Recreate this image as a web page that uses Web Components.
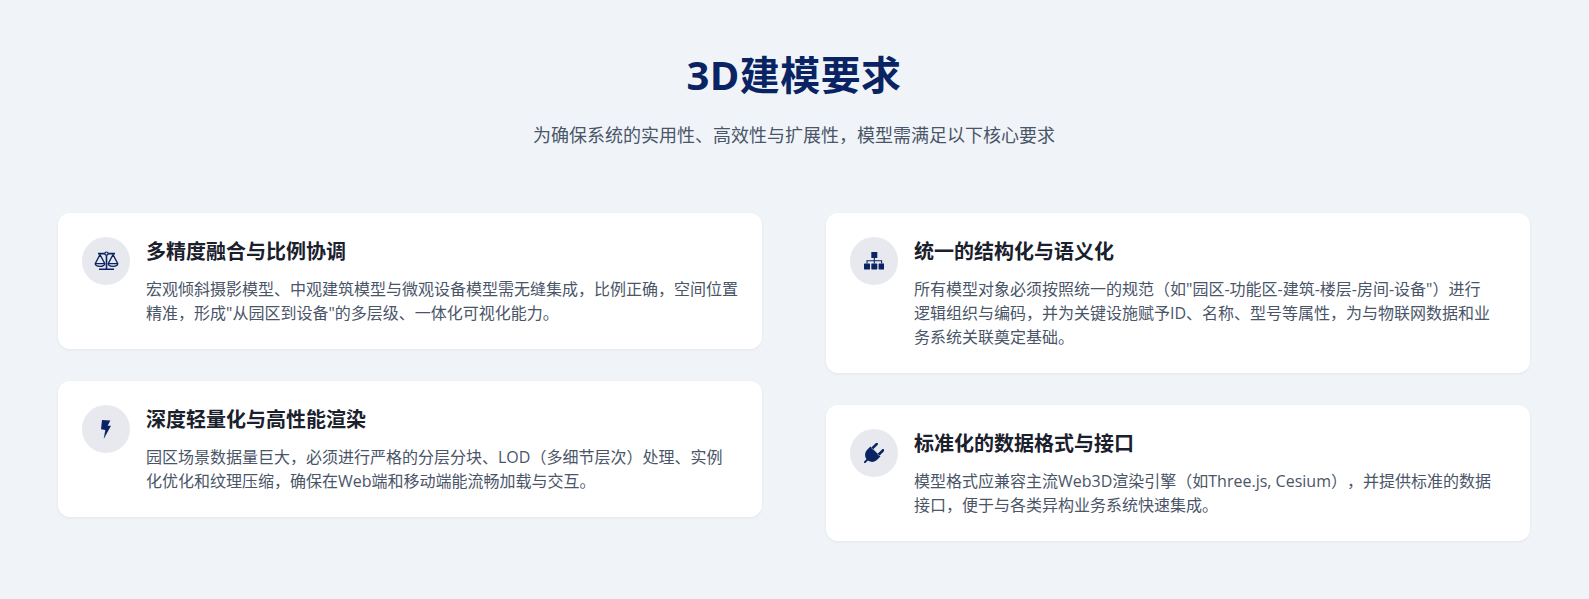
<!DOCTYPE html>
<html lang="zh">
<head>
<meta charset="utf-8">
<title>3D建模要求</title>
<style>
  html, body { margin: 0; background: #f0f4f8; }
  body { font-family: "Open Sans", "Noto Sans CJK SC", sans-serif; text-spacing-trim: space-all; }
</style>
</head>
<body>
<req-page>
  <req-header heading="3D建模要求" sub="为确保系统的实用性、高效性与扩展性，模型需满足以下核心要求"></req-header>
  <req-column>
    <req-card icon="scale" heading="多精度融合与比例协调">宏观倾斜摄影模型、中观建筑模型与微观设备模型需无缝集成，比例正确，空间位置精准，形成"从园区到设备"的多层级、一体化可视化能力。</req-card>
    <req-card icon="bolt" heading="深度轻量化与高性能渲染">园区场景数据量巨大，必须进行严格的分层分块、LOD（多细节层次）处理、实例化优化和纹理压缩，确保在Web端和移动端能流畅加载与交互。</req-card>
  </req-column>
  <req-column>
    <req-card icon="tree" heading="统一的结构化与语义化">所有模型对象必须按照统一的规范（如"园区-功能区-建筑-楼层-房间-设备"）进行<br>逻辑组织与编码，并为关键设施赋予ID、名称、型号等属性，为与物联网数据和业务系统关联奠定基础。</req-card>
    <req-card icon="plug" heading="标准化的数据格式与接口">模型格式应兼容主流Web3D渲染引擎（如Three.js, Cesium），并提供标准的数据接口，便于与各类异构业务系统快速集成。</req-card>
  </req-column>
</req-page>
<script>
const ICONS = {
  scale: '<svg viewBox="0 0 25 20" width="25" height="20"><g fill="none" stroke="currentColor"><path stroke-width="1.6" d="M4 2.600h17M12.500 2.600V18M5 18.300h15"/><path stroke-width="1.300" d="M6 3.600 1.200 12.600a4.800 2.800 0 0 0 9.600 0zM19 3.600 14.200 12.600a4.800 2.800 0 0 0 9.600 0zM1.200 12.600h9.600M14.200 12.600h9.600"/></g><circle cx="12.500" cy="2.600" r="1.600" fill="#e7e9ef" stroke="currentColor" stroke-width="1.200"/></svg>',
  bolt: '<svg viewBox="0 0 10 19" width="10" height="19"><path fill="currentColor" d="M1 0 9.300.5 6.700 5.700H10L2.700 19 4.300 10 0 9.300z"/></svg>',
  tree: '<svg viewBox="0 0 20.600 17.400" width="20.600" height="17.400"><g fill="currentColor"><rect x="7.300" y="0" width="6" height="6" rx=".6"/><rect x="0" y="11.400" width="6" height="6" rx=".6"/><rect x="7.300" y="11.400" width="6" height="6" rx=".6"/><rect x="14.600" y="11.400" width="6" height="6" rx=".6"/></g><path fill="none" stroke="currentColor" stroke-width="1.100" d="M10.300 6v5.400M3 11.400V8.700h14.600v2.700"/></svg>',
  plug: '<svg viewBox="-181 -249 430 430" width="20" height="20"><g transform="rotate(45) translate(-192 -256)"><path fill="currentColor" d="M96 0C80 0 68 14.300 68 32v140h56V32c0-17.700-12-32-28-32zM288 0c-16 0-28 14.300-28 32v140h56V32c0-17.700-12-32-28-32zM40 165H344V256C344 333 297 398 224 412.800H212V512H172V412.800H160C87 398 40 333 40 256z"/></g></svg>'
};

class ReqPage extends HTMLElement {
  constructor() {
    super();
    this.attachShadow({ mode: 'open' });
    this.shadowRoot.innerHTML = `
      <style>
        :host {
          display: grid;
          grid-template-columns: 704px 704px;
          column-gap: 64px;
          align-items: start;
          align-content: start;
          padding: 0 59px 0 58px;
          height: 599px;
          overflow: hidden;
          background: #f0f4f8;
        }
        ::slotted(req-header) { grid-column: 1 / -1; }
      </style>
      <slot></slot>
    `;
  }
}

class ReqHeader extends HTMLElement {
  constructor() {
    super();
    this.attachShadow({ mode: 'open' });
  }
  connectedCallback() {
    this.shadowRoot.innerHTML = `
      <style>
        :host { display: block; text-align: center; padding-top: 48px; height: 165px; }
        h1 {
          margin: 0;
          font-size: 40px;
          line-height: 54px;
          font-weight: 700;
          letter-spacing: 0.4px;
          color: #0a2463;
        }
        p {
          margin: 19px 0 0;
          font-size: 18px;
          line-height: 28px;
          color: #4a5568;
        }
      </style>
      <h1>${this.getAttribute('heading')}</h1>
      <p>${this.getAttribute('sub')}</p>
    `;
  }
}

class ReqColumn extends HTMLElement {
  constructor() {
    super();
    this.attachShadow({ mode: 'open' });
    this.shadowRoot.innerHTML = `
      <style>
        :host { display: flex; flex-direction: column; gap: 32px; }
      </style>
      <slot></slot>
    `;
  }
}

class ReqCard extends HTMLElement {
  constructor() {
    super();
    this.attachShadow({ mode: 'open' });
  }
  connectedCallback() {
    this.shadowRoot.innerHTML = `
      <style>
        :host {
          display: flex;
          gap: 16px;
          padding: 24px;
          background: #fff;
          border-radius: 12px;
          box-shadow: 0 1px 3px rgba(0, 0, 0, 0.06);
        }
        .icon {
          flex: none;
          width: 48px;
          height: 48px;
          border-radius: 50%;
          background: #e7e9ef;
          color: #0a2463;
          display: flex;
          align-items: center;
          justify-content: center;
        }
        svg { display: block; }
        .text { flex: 1; min-width: 0; }
        h3 {
          margin: 0 0 10px;
          font-size: 20px;
          line-height: 30px;
          font-weight: 700;
          color: #1a202c;
        }
        p {
          margin: 0;
          font-size: 16px;
          line-height: 24px;
          color: #4a5568;
        }
      </style>
      <div class="icon">${ICONS[this.getAttribute('icon')]}</div>
      <div class="text">
        <h3>${this.getAttribute('heading')}</h3>
        <p><slot></slot></p>
      </div>
    `;
  }
}

customElements.define('req-page', ReqPage);
customElements.define('req-header', ReqHeader);
customElements.define('req-column', ReqColumn);
customElements.define('req-card', ReqCard);
</script>
</body>
</html>
